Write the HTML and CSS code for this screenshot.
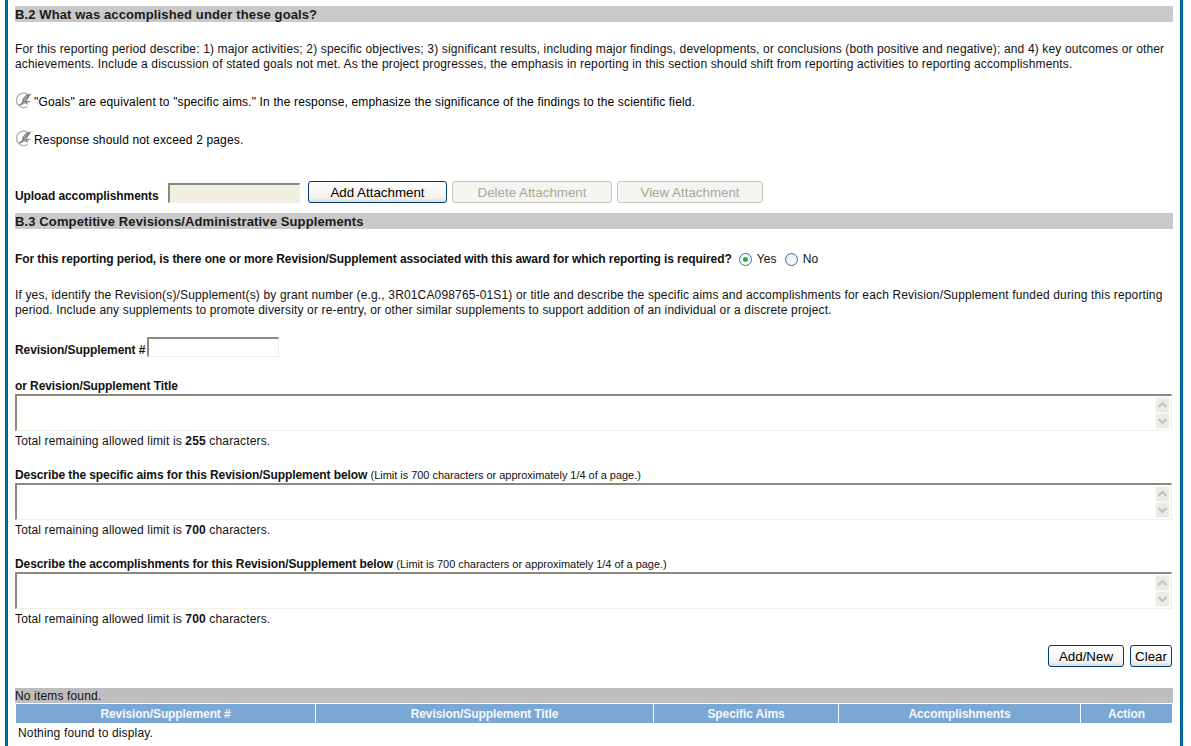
FILE: index.html
```html
<!DOCTYPE html>
<html lang="en">
<head>
<meta charset="utf-8">
<title>B.2 Accomplishments</title>
<link rel="stylesheet" href="styles.css">
</head>
<body>
<svg class="defs" width="0" height="0" aria-hidden="true">
  <symbol id="hhs" viewBox="0 0 17 17">
    <path d="M13 2.400A7.300 7.300 0 1 0 12.600 14.500" fill="#fff" stroke="#b0b0b0" stroke-width="1.300"/>
    <path d="M3.500 13 7 10.500 7.500 7 11 3l1.500-.6L16.500 1.500 14 5l-2.500 4 5 .5-4.500 1.200 1.500 2.300-3.500-1.800-3 1.600-2 .7z" fill="#7a7a7a"/>
    <path d="M8.500 7.500 12 4M8.500 9.500l3.500-3M7.500 12l4-2" stroke="#dcdcdc" stroke-width=".7" fill="none"/>
  </symbol>
  <symbol id="spin" viewBox="0 0 15 16">
    <rect x=".5" y=".5" width="14" height="15" rx="1.500" fill="#ecece4" stroke="#f8f8f3"/>
    <path d="M3.500 10l4-4 4 4" fill="none" stroke="#c2c2bb" stroke-width="2.200"/>
  </symbol>
</svg>
<main class="page">
  <h2 class="bar">B.2 What was accomplished under these goals?</h2>
  <p class="para first">For this reporting period describe: 1) major activities; 2) specific objectives; 3) significant results, including major findings, developments, or conclusions (both positive and negative); and 4) key outcomes or other achievements. Include a discussion of stated goals not met. As the project progresses, the emphasis in reporting in this section should shift from reporting activities to reporting accomplishments.</p>
  <p class="note goals"><svg class="hhs"><use href="#hhs"/></svg><span>"Goals" are equivalent to "specific aims." In the response, emphasize the significance of the findings to the scientific field.</span></p>
  <p class="note limit"><svg class="hhs"><use href="#hhs"/></svg><span>Response should not exceed 2 pages.</span></p>
  <div class="upload">
    <label class="lbl upload-lbl">Upload accomplishments</label>
    <input class="field file" type="text" disabled>
    <button class="btn add" type="button">Add Attachment</button>
    <button class="btn del" type="button" disabled>Delete Attachment</button>
    <button class="btn view" type="button" disabled>View Attachment</button>
  </div>
  <h2 class="bar second">B.3 Competitive Revisions/Administrative Supplements</h2>
  <div class="question">
    <span class="lbl">For this reporting period, is there one or more Revision/Supplement associated with this award for which reporting is required?</span>
    <span class="radio on"></span><span class="opt">Yes</span>
    <span class="radio off"></span><span class="opt">No</span>
  </div>
  <p class="para ifyes">If yes, identify the Revision(s)/Supplement(s) by grant number (e.g., 3R01CA098765-01S1) or title and describe the specific aims and accomplishments for each Revision/Supplement funded during this reporting period. Include any supplements to promote diversity or re-entry, or other similar supplements to support addition of an individual or a discrete project.</p>
  <div class="revnum">
    <label class="lbl">Revision/Supplement #</label>
    <input class="field num" type="text">
  </div>
  <div class="lbl block title">or Revision/Supplement Title</div>
  <div class="area"><div class="spins"><svg class="spin"><use href="#spin"/></svg><svg class="spin down"><use href="#spin"/></svg></div></div>
  <div class="remain">Total remaining allowed limit is <b>255</b> characters.</div>
  <div class="lbl block aims">Describe the specific aims for this Revision/Supplement below <small>(Limit is 700 characters or approximately 1/4 of a page.)</small></div>
  <div class="area"><div class="spins"><svg class="spin"><use href="#spin"/></svg><svg class="spin down"><use href="#spin"/></svg></div></div>
  <div class="remain">Total remaining allowed limit is <b>700</b> characters.</div>
  <div class="lbl block aims">Describe the accomplishments for this Revision/Supplement below <small>(Limit is 700 characters or approximately 1/4 of a page.)</small></div>
  <div class="area"><div class="spins"><svg class="spin"><use href="#spin"/></svg><svg class="spin down"><use href="#spin"/></svg></div></div>
  <div class="remain">Total remaining allowed limit is <b>700</b> characters.</div>
  <div class="actions">
    <button class="btn addnew" type="button">Add/New</button>
    <button class="btn clear" type="button">Clear</button>
  </div>
  <div class="found">No items found.</div>
  <div class="thead">
    <div class="th">Revision/Supplement #</div>
    <div class="th">Revision/Supplement Title</div>
    <div class="th">Specific Aims</div>
    <div class="th">Accomplishments</div>
    <div class="th">Action</div>
  </div>
  <div class="empty">Nothing found to display.</div>
</main>
</body>
</html>
```

FILE: styles.css
```css
* { box-sizing: border-box; }
html, body { margin: 0; padding: 0; background: #fff; }
body { font: 12px/15px "Liberation Sans", Arial, sans-serif; letter-spacing: .15px; color: #000; height: 746px; overflow: hidden; }
.defs { position: absolute; }
.page {
  margin: 0 8px 0 5px;
  height: 746px;
  padding: 6px 7px 0 7px;
  border-left: 3px solid #00679e;
  border-right: 3px solid #00679e;
  overflow: hidden;
}
.bar { margin: 0; height: 16px; background: #c9c9c9; font-size: 13px; line-height: 17px; letter-spacing: .12px; font-weight: bold; color: #1a1a1a; white-space: nowrap; }
.para { margin: 0; color: #111; }
.first { margin-top: 20px; }
.note { margin: 0; display: flex; align-items: flex-start; }
.goals { margin-top: 20px; height: 38px; }
.limit { height: 47px; }
.note span { margin-top: 3px; margin-left: 2px; }
.hhs { width: 17px; height: 17px; flex: none; }
.upload { display: flex; align-items: flex-start; margin-top: 4px; margin-bottom: 5px; height: 27px; }
.lbl { font-weight: bold; color: #111; letter-spacing: -.085px; white-space: nowrap; }
.upload-lbl { margin-top: 8px; width: 153px; }
.field { display: block; margin: 0; padding: 0; background: #fff; border: 1px solid #f1efe2; border-top: 2px solid #8c8a7e; border-left: 2px solid #8c8a7e; border-radius: 0; }
.file { width: 132px; height: 20px; margin-top: 2px; background: #f1efe2; border-color: #8c8a7e #f1efe2 #f1efe2 #8c8a7e; }
.btn {
  display: block;
  height: 22px;
  margin: 0;
  padding: 0;
  font: 13.33px "Liberation Sans", Arial, sans-serif;
  color: #000;
  background: linear-gradient(#fff, #f3f2ee 80%, #dcdad0);
  border: 1px solid #003c74;
  border-radius: 3px;
}
.btn:disabled { color: #a9a79c; background: #f4f4f0; border-color: #cac8bb; }
.add { width: 139px; margin-left: 8px; }
.del { width: 160px; margin-left: 5px; }
.view { width: 146px; margin-left: 5px; }
.question { display: flex; align-items: center; margin-top: 23px; height: 15px; line-height: 17px; }
.radio { width: 13px; height: 13px; border: 1px solid #3c6f97; border-radius: 50%; background: radial-gradient(circle at 60% 60%, #fff, #dfe3e8); display: block; flex: none; }
.radio.on { margin-left: 7px; background: radial-gradient(#2fae3c 0 2px, #fff 3px); }
.radio.off { margin-left: 8px; }
.opt { margin-left: 5px; color: #111; }
.ifyes { margin-top: 21px; }
.revnum { display: flex; align-items: flex-start; margin-top: 19px; height: 20px; }
.revnum .lbl { margin-top: 6px; width: 132px; }
.num { width: 132px; height: 20px; }
.block { white-space: nowrap; }
.title { margin-top: 22px; }
.aims { margin-top: 19px; }
small { font-size: 11px; font-weight: normal; letter-spacing: -.03px; }
.area { height: 37px; margin: 0 1px 0 0; padding: 1px 1px 0 0; border: 1px solid #f1efe2; border-top: 2px solid #8c8a7e; border-left: 2px solid #8c8a7e; display: flex; justify-content: flex-end; }
.spins { width: 15px; display: flex; flex-direction: column; }
.spin { width: 15px; height: 16px; display: block; flex: none; }
.spin.down { transform: scaleY(-1); }
.remain { margin-top: 3px; color: #111; }
.actions { display: flex; justify-content: flex-end; gap: 6px; margin-top: 18px; padding-right: 1px; }
.addnew { width: 76px; }
.clear { width: 42px; }
.found { margin-top: 21px; height: 15px; background: #bebebe; line-height: 16px; color: #111; }
.thead { display: grid; grid-template-columns: 299px 337px 184px 241px 91px; gap: 1px; margin-top: 1px; margin-left: 1px; width: 1156px; background: #fff; }
.th { height: 19px; background: #7ba7d4; color: #f4f8fc; font-weight: bold; text-align: center; line-height: 20px; letter-spacing: -.085px; }
.empty { margin-top: 3px; padding: 0 3px; height: 15px; color: #111; }
```
